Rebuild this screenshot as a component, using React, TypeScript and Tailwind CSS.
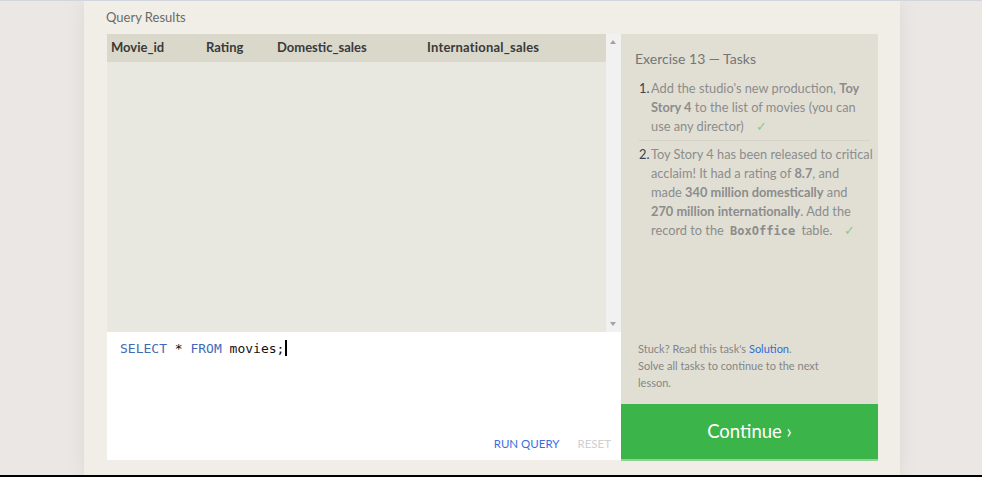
import React from "react";

const sans = { fontFamily: "Lato, 'Open Sans', sans-serif" };
const mono = { fontFamily: "'DejaVu Sans Mono', monospace" };

export default function App() {
  return (
    <div
      className="relative h-[477px] w-[982px] overflow-hidden border-t border-[#cfd6de] bg-[#ebe7e4]"
      style={sans}
    >
      <div className="ml-[84px] flex h-[474px] w-[816px] flex-col bg-[#f0eee6] pl-[22px] shadow-[0_0_18px_rgba(0,0,0,0.07)]">
        <div className="h-[33px] pt-[8px] text-[13px] leading-[17px] text-[#6b6b6b]">Query Results</div>
        <div className="flex w-[771px] pl-px">
          <div className="flex w-[514px] flex-col">
            <div className="flex h-[298px]">
              <div className="flex w-[499px] flex-col bg-[#e9e8e0]">
                <div className="flex h-[28px] items-center bg-[#d9d8cb] pl-[4px] text-[13px] font-bold text-[#3a3a3a]">
                  <div className="w-[95px]">Movie_id</div>
                  <div className="w-[71px]">Rating</div>
                  <div className="w-[150px]">Domestic_sales</div>
                  <div className="tracking-[0.2px]">International_sales</div>
                </div>
              </div>
              <div className="relative w-[15px] bg-[#f1f1f1]">
                <div className="absolute left-[4px] top-[6px] h-0 w-0 border-x-[3.5px] border-b-[4px] border-x-transparent border-b-[#a3a3a3]" />
                <div className="absolute bottom-[6px] left-[4px] h-0 w-0 border-x-[3.5px] border-t-[4px] border-x-transparent border-t-[#a3a3a3]" />
              </div>
            </div>
            <div className="relative h-[128px] bg-white">
              <div className="pl-[13px] pt-[5px] text-[13px] leading-[17px] text-[#111]" style={mono}>
                <span className="text-[#3f6ab6]">SELECT</span> * <span className="text-[#3f6ab6]">FROM</span> movies;
                <span className="ml-px inline-block h-[16px] w-[2px] translate-y-[3px] bg-black" />
              </div>
              <div className="absolute bottom-[9px] right-[10px] flex gap-[18px] text-[11.5px] leading-[14px]">
                <span className="text-[#3a6ee0]">RUN QUERY</span>
                <span className="text-[#cfcfcf]">RESET</span>
              </div>
            </div>
          </div>
          <div className="flex w-[257px] flex-col">
            <div className="flex h-[370px] flex-col bg-[#e1dfd4] pl-[14px] pr-[8px]">
              <div className="pt-[16px] text-[14px] leading-[18px] text-[#757575]">Exercise 13 — Tasks</div>
              <div className="mt-[11px] pl-[4px] text-[12.8px] leading-[19px] text-[#8c8c8c]">
                <div className="flex border-b border-[#d5d3c8] pb-[4px]">
                  <span className="w-[12px] shrink-0 text-[#3d4250]">1.</span>
                  <div className="flex flex-col whitespace-nowrap">
                    <span>
                      Add the studio's new production, <b>Toy</b>
                    </span>
                    <span>
                      <b>Story 4</b> to the list of movies (you can
                    </span>
                    <span>
                      use any director)<span className="ml-[12px] text-[#7fcf86]">✓</span>
                    </span>
                  </div>
                </div>
                <div className="flex pt-[4px]">
                  <span className="w-[12px] shrink-0 text-[#3d4250]">2.</span>
                  <div className="flex flex-col whitespace-nowrap">
                    <span>Toy Story 4 has been released to critical</span>
                    <span>
                      acclaim! It had a rating of <b>8.7</b>, and
                    </span>
                    <span>
                      made <b>340 million domestically</b> and
                    </span>
                    <span>
                      <b>270 million internationally</b>. Add the
                    </span>
                    <span>
                      record to the{" "}
                      <span className="px-[3px] text-[12px] font-bold" style={mono}>
                        BoxOffice
                      </span>{" "}
                      table.<span className="ml-[12px] text-[#7fcf86]">✓</span>
                    </span>
                  </div>
                </div>
              </div>
              <div className="mt-auto pb-[13px] pl-[3px] pr-[40px] text-[11px] leading-[17px] text-[#858585]">
                Stuck? Read this task's <span className="text-[#2f6bd8]">Solution</span>.
                <br />
                Solve all tasks to continue to the next lesson.
              </div>
            </div>
            <div className="flex h-[57px] items-center justify-center border-b-2 border-[#8fd394] bg-[#3bb54a] text-[18.5px] text-white">
              Continue ›
            </div>
          </div>
        </div>
      </div>
      <div className="absolute bottom-0 left-0 h-[2px] w-full bg-black" />
    </div>
  );
}
